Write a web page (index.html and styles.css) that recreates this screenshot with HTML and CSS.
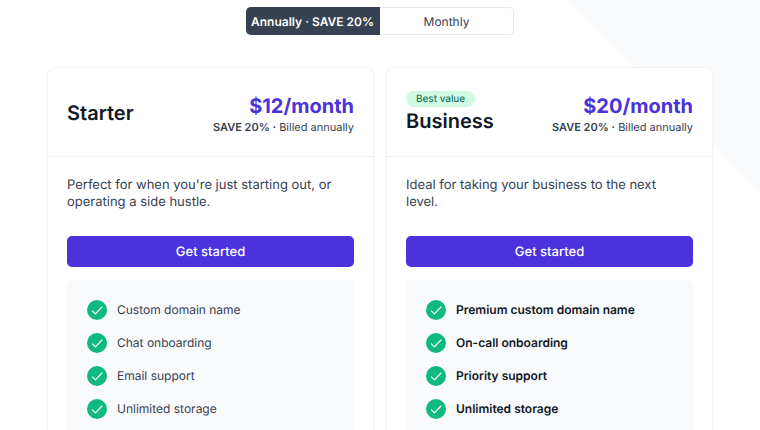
FILE: index.html
```html
<!DOCTYPE html>
<html lang="en">
<head>
    <meta charset="UTF-8">
    <meta name="viewport" content="width=device-width, initial-scale=1.0">
    <title>Pricing</title>
    <link rel="stylesheet" href="styles.css">
</head>
<body>
    <svg class="sprite" aria-hidden="true">
        <symbol id="check" viewBox="0 0 20 20">
            <circle cx="10" cy="10" r="10" fill="#10b981"/>
            <path d="M5.4 10.9 8.4 13.9 15 7" fill="none" stroke="#fff" stroke-width="1.1" stroke-linecap="round" stroke-linejoin="round"/>
        </symbol>
    </svg>

    <main class="pricing">
        <div class="backdrop"></div>

        <div class="billing-toggle">
            <button type="button" class="toggle-option active" aria-pressed="true">Annually · SAVE 20%</button>
            <button type="button" class="toggle-option" aria-pressed="false">Monthly</button>
        </div>

        <div class="plans">
            <section class="plan">
                <header class="plan-header">
                    <div class="plan-title">
                        <h2 class="plan-name">Starter</h2>
                    </div>
                    <div class="plan-cost">
                        <p class="price">$12/month</p>
                        <p class="billing"><strong>SAVE 20% ·</strong> Billed annually</p>
                    </div>
                </header>
                <div class="plan-body">
                    <p class="description">Perfect for when you're just starting out, or operating a side hustle.</p>
                    <button type="button" class="cta">Get started</button>
                    <ul class="features">
                        <li><svg class="check"><use href="#check"/></svg>Custom domain name</li>
                        <li><svg class="check"><use href="#check"/></svg>Chat onboarding</li>
                        <li><svg class="check"><use href="#check"/></svg>Email support</li>
                        <li><svg class="check"><use href="#check"/></svg>Unlimited storage</li>
                    </ul>
                </div>
            </section>

            <section class="plan">
                <header class="plan-header">
                    <div class="plan-title">
                        <span class="badge">Best value</span>
                        <h2 class="plan-name">Business</h2>
                    </div>
                    <div class="plan-cost">
                        <p class="price">$20/month</p>
                        <p class="billing"><strong>SAVE 20% ·</strong> Billed annually</p>
                    </div>
                </header>
                <div class="plan-body">
                    <p class="description">Ideal for taking your business to the next level.</p>
                    <button type="button" class="cta">Get started</button>
                    <ul class="features features-strong">
                        <li><svg class="check"><use href="#check"/></svg>Premium custom domain name</li>
                        <li><svg class="check"><use href="#check"/></svg>On-call onboarding</li>
                        <li><svg class="check"><use href="#check"/></svg>Priority support</li>
                        <li><svg class="check"><use href="#check"/></svg>Unlimited storage</li>
                    </ul>
                </div>
            </section>
        </div>
    </main>
</body>
</html>
```

FILE: styles.css
```css
* {
    box-sizing: border-box;
}

body {
    margin: 0;
    background: #fff;
    color: #374151;
    font-family: Inter, sans-serif;
    font-size: 12px;
    line-height: 16px;
    text-rendering: geometricPrecision;
}

h2,
p,
ul {
    margin: 0;
    padding: 0;
}

button {
    font-family: inherit;
    text-rendering: inherit;
    cursor: pointer;
}

.sprite {
    display: none;
}

.pricing {
    position: relative;
    height: 100vh;
    overflow: hidden;
    padding: 7px 47px 0;
}

/* slanted corner behind the cards */
.backdrop {
    position: absolute;
    top: 0;
    right: 0;
    z-index: -1;
    width: 192px;
    height: 192px;
    background: #f9fafb;
    clip-path: polygon(0 0, 100% 0, 100% 100%);
}

.billing-toggle {
    display: grid;
    grid-template-columns: 1fr 1fr;
    width: 268px;
    margin: 0 auto 32px;
}

.toggle-option {
    padding: 6px 0 4px;
    border: 1px solid #e5e7eb;
    border-left: 0;
    border-radius: 0 5px 5px 0;
    background: #fff;
    color: #374151;
    font-size: 12px;
    font-weight: 400;
    line-height: 16px;
    white-space: nowrap;
}

.toggle-option.active {
    border-color: #374151;
    border-radius: 5px 0 0 5px;
    background: #374151;
    color: #fff;
    font-weight: 600;
}

.plans {
    display: grid;
    grid-template-columns: 1fr 1fr;
    gap: 12px;
}

.plan {
    border-radius: 8px;
    background: #fff;
    box-shadow: inset 0 0 0 1px #f3f4f6, 0 1px 2px rgba(0, 0, 0, 0.05);
}

.plan-header {
    display: flex;
    align-items: center;
    justify-content: space-between;
    min-height: 90px;
    padding: 2px 20px 0;
    border-bottom: 1px solid #eeeff2;
}

.badge {
    display: block;
    width: fit-content;
    padding: 0 10px;
    border-radius: 8px;
    background: #d1fae5;
    color: #065f46;
    font-size: 10px;
    line-height: 16px;
}

.plan-name {
    color: #111827;
    font-size: 20px;
    font-weight: 600;
    line-height: 28px;
}

.plan-cost {
    padding-top: 3px;
    text-align: right;
}

.price {
    color: #4c32dc;
    font-size: 20px;
    font-weight: 700;
    line-height: 26px;
}

.billing {
    font-size: 11px;
}

.billing strong {
    font-weight: 600;
}

.plan-body {
    padding: 20px;
}

.description {
    margin-bottom: 25px;
    padding-right: 8px;
    font-size: 13px;
    line-height: 17px;
}

.cta {
    display: block;
    width: 100%;
    padding: 8px 7px 6px;
    border: 0;
    border-radius: 5px;
    background: #4c32dc;
    color: #fff;
    font-size: 13px;
    font-weight: 500;
    line-height: 17px;
}

.features {
    display: grid;
    gap: 13px;
    margin-top: 13px;
    padding: 20px 20px 40px;
    border-radius: 6px;
    background: #f9fafb;
    list-style: none;
}

.features li {
    display: flex;
    align-items: center;
    gap: 10px;
}

.features-strong {
    color: #111827;
    font-weight: 600;
}

.check {
    flex: none;
    width: 20px;
    height: 20px;
}
```
